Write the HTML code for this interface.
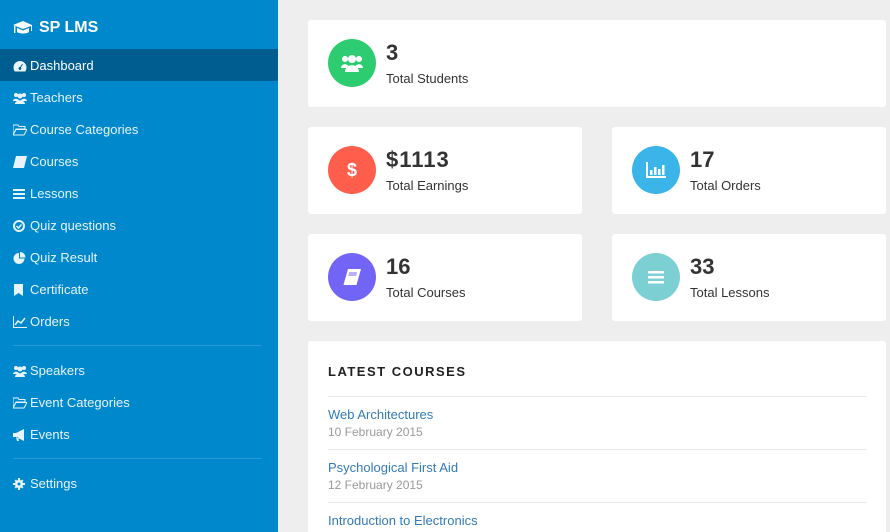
<!DOCTYPE html>
<html><head><style>
*{margin:0;padding:0;box-sizing:border-box}
html,body{width:890px;height:532px;overflow:hidden}
body{background:#eeeeee;font-family:"Liberation Sans",Arial,sans-serif;position:relative}
.sb{position:absolute;left:0;top:0;width:278px;height:532px;background:#0088cc;color:#fff}
.logo{position:absolute;left:13px;top:19px;font-size:16px;font-weight:bold;display:flex;align-items:center}
.logo svg{margin-right:6px}
.it{position:absolute;left:0;width:278px;height:32px;line-height:32px;padding-left:13px;padding-top:2px;font-size:13px;color:#e8f4fb;display:flex;align-items:center}
.it.act{background:#005d8f;color:#fff}
.it svg{width:14px;height:12px;margin-right:3px;fill:#e8f4fb}
.hr{position:absolute;left:13px;width:248px;height:1px;background:#2a9bd3}
.card{position:absolute;background:#fff;border-radius:3px;overflow:hidden}
.circ{position:absolute;left:20px;top:19px;width:48px;height:48px;border-radius:50%;color:#fff;text-align:center;line-height:48px;font-size:18px;font-weight:bold;display:flex;align-items:center;justify-content:center}
.circ svg{fill:#fff}
.num{position:absolute;left:78px;top:20px;font-size:22px;font-weight:bold;color:#333}
.lbl{position:absolute;left:78px;top:51px;font-size:13px;color:#333}
.lc a{position:absolute;left:20px;font-size:13px;color:#337ab7}
.lc .d{position:absolute;left:20px;font-size:12px;color:#999}
.lc .l{position:absolute;left:20px;width:538px;height:1px;background:#e6e6e6}
</style></head><body>
<div class="sb">
<div class="logo"><svg width="20" height="14" viewBox="0 0 20 14" fill="#fff"><path d="M10 0L0 4l10 4 8-3v5h1V4z"/><path d="M4 7v4c2 2 10 2 12 0V7l-6 2.5z"/><rect x="1" y="5" width="1.4" height="7"/></svg>SP LMS</div>
<div class="it act" style="top:49px"><svg viewBox="0 0 14 12"><path d="M7 1A6.5 6.5 0 0 0 .5 7.5c0 1.5.5 3 1.3 4h10.4c.8-1 1.3-2.5 1.3-4A6.5 6.5 0 0 0 7 1zm0 9a1.5 1.5 0 1 1 .1-3l2-3 .8.5-2 3A1.5 1.5 0 0 1 7 10z"/></svg>Dashboard</div>
<div class="it" style="top:81px"><svg viewBox="0 0 14 12"><circle cx="3" cy="3" r="2"/><circle cx="11" cy="3" r="2"/><circle cx="7" cy="4" r="2.5"/><path d="M0 9c0-3 6-3 6 0zM8 9c0-3 6-3 6 0zM2 12c0-5 10-5 10 0z"/></svg>Teachers</div>
<div class="it" style="top:113px"><svg viewBox="0 0 14 12"><path d="M0 1h5l1 1.5h6V5H3L0 11zM3 5.5h11L11 11H0z" fill="none" stroke="#e8f4fb"/></svg>Course Categories</div>
<div class="it" style="top:145px"><svg viewBox="0 0 14 12"><path d="M3 0h11l-3 12H0z"/></svg>Courses</div>
<div class="it" style="top:177px"><svg viewBox="0 0 14 12"><rect y="1" width="12" height="2"/><rect y="5" width="12" height="2"/><rect y="9" width="12" height="2"/></svg>Lessons</div>
<div class="it" style="top:209px"><svg viewBox="0 0 14 12"><circle cx="6" cy="6" r="5" fill="none" stroke="#e8f4fb" stroke-width="2"/><path d="M3.5 6l2 2 3-3.5" fill="none" stroke="#e8f4fb" stroke-width="1.5"/></svg>Quiz questions</div>
<div class="it" style="top:241px"><svg viewBox="0 0 14 12"><path d="M6 1a5.5 5.5 0 1 0 5.5 5.5H6z"/><path d="M7 0v5.5h5.5A5.5 5.5 0 0 0 7 0z"/></svg>Quiz Result</div>
<div class="it" style="top:273px"><svg viewBox="0 0 14 12"><path d="M1 0h9v12l-4.5-3L1 12z"/></svg>Certificate</div>
<div class="it" style="top:305px"><svg viewBox="0 0 14 12"><path d="M0 0v12h14v-1H1V0z"/><path d="M2 9l3-4 3 2 4-5" fill="none" stroke="#e8f4fb" stroke-width="1.5"/></svg>Orders</div>
<div class="hr" style="top:345px"></div>
<div class="it" style="top:354px"><svg viewBox="0 0 14 12"><circle cx="3" cy="3" r="2"/><circle cx="11" cy="3" r="2"/><circle cx="7" cy="4" r="2.5"/><path d="M0 9c0-3 6-3 6 0zM8 9c0-3 6-3 6 0zM2 12c0-5 10-5 10 0z"/></svg>Speakers</div>
<div class="it" style="top:386px"><svg viewBox="0 0 14 12"><path d="M0 1h5l1 1.5h6V5H3L0 11zM3 5.5h11L11 11H0z" fill="none" stroke="#e8f4fb"/></svg>Event Categories</div>
<div class="it" style="top:418px"><svg viewBox="0 0 14 12"><path d="M0 4h3l8-4v12L3 8H0zM3 8l1 4h2L5 8z"/></svg>Events</div>
<div class="hr" style="top:458px"></div>
<div class="it" style="top:467px"><svg viewBox="0 0 14 12"><circle cx="6" cy="6" r="4"/><path d="M5 0h2v12H5zM0 5h12v2H0z"/><path d="M1.5 2.9l1.4-1.4 7.6 7.6-1.4 1.4zM9.1 1.5l1.4 1.4-7.6 7.6-1.4-1.4z"/><circle cx="6" cy="6" r="1.5" fill="#0088cc"/></svg>Settings</div>
</div>

<div class="card" style="left:308px;top:20px;width:578px;height:87px"><div class="circ" style="background:#2ecc71"><svg width="22" height="18" viewBox="0 0 22 18"><circle cx="4" cy="5" r="3"/><circle cx="18" cy="5" r="3"/><circle cx="11" cy="5" r="4"/><path d="M0 14c0-5 8-5 8 0zM14 14c0-5 8-5 8 0zM4 18c0-9 14-9 14 0z"/></svg></div><div class="num">3</div><div class="lbl">Total Students</div></div>
<div class="card" style="left:308px;top:127px;width:274px;height:87px"><div class="circ" style="background:#ff5e4d">$</div><div class="num" style="letter-spacing:1px">$1113</div><div class="lbl">Total Earnings</div></div>
<div class="card" style="left:612px;top:127px;width:274px;height:87px"><div class="circ" style="background:#3bb4ea"><svg width="20" height="16" viewBox="0 0 20 16"><path d="M0 0h2v14h18v2H0z"/><rect x="4" y="8" width="2.5" height="5"/><rect x="8" y="5" width="2.5" height="8"/><rect x="12" y="7" width="2.5" height="6"/><rect x="16" y="3" width="2.5" height="10"/></svg></div><div class="num">17</div><div class="lbl">Total Orders</div></div>
<div class="card" style="left:308px;top:234px;width:274px;height:87px"><div class="circ" style="background:#7265f5"><svg width="18" height="16" viewBox="0 0 18 16"><path d="M5 0h13l-4 14H1z"/><path d="M1 14h13l-.5 2H0.5z"/><path d="M6 4h8M5.5 6h8" stroke="#7265f5" stroke-width="1"/></svg></div><div class="num">16</div><div class="lbl">Total Courses</div></div>
<div class="card" style="left:612px;top:234px;width:274px;height:87px"><div class="circ" style="background:#7ccfd3"><svg width="16" height="14" viewBox="0 0 16 14"><rect y="1" width="16" height="2.5"/><rect y="6" width="16" height="2.5"/><rect y="11" width="16" height="2.5"/></svg></div><div class="num">33</div><div class="lbl">Total Lessons</div></div>

<div class="card lc" style="left:308px;top:341px;width:578px;height:191px;border-radius:3px 3px 0 0">
<div style="position:absolute;left:20px;top:23px;font-size:13px;font-weight:bold;letter-spacing:1.5px;color:#222">LATEST COURSES</div>
<div class="l" style="top:55px"></div>
<a style="top:66px">Web Architectures</a><div class="d" style="top:84px">10 February 2015</div>
<div class="l" style="top:108px"></div>
<a style="top:119px">Psychological First Aid</a><div class="d" style="top:137px">12 February 2015</div>
<div class="l" style="top:161px"></div>
<a style="top:172px">Introduction to Electronics</a>
</div>
</body></html>
